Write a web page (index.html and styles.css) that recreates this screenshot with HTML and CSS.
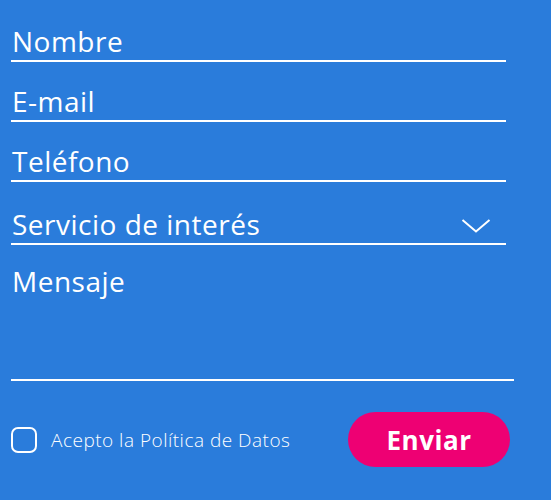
FILE: index.html
```html
<!DOCTYPE html>
<html lang="es">
<head>
<meta charset="utf-8">
<link rel="stylesheet" href="styles.css">
</head>
<body>
<form class="form">
  <div class="field"><span class="label">Nombre</span></div>
  <div class="field"><span class="label">E-mail</span></div>
  <div class="field"><span class="label">Teléfono</span></div>
  <div class="field field-select">
    <span class="label">Servicio de interés</span>
    <svg class="chevron" width="30" height="16" viewBox="0 0 30 16"><path d="M1.5 2 L15 13.5 L28.5 2" fill="none" stroke="#fff" stroke-width="2"/></svg>
  </div>
  <div class="field field-message"><span class="label">Mensaje</span></div>
  <div class="footer">
    <label class="consent"><span class="box"></span><span class="consent-text">Acepto la Política de Datos</span></label>
    <button type="button" class="send">Enviar</button>
  </div>
</form>
</body>
</html>
```
FILE: styles.css
```css
html, body {
  margin: 0;
  padding: 0;
  background: #2a7cdb;
  height: 100%;
}
body {
  font-family: "Open Sans", "Liberation Sans", sans-serif;
  color: #fff;
}
.form {
  padding: 2px 0 0 11px;
  width: 503px;
}
.field {
  width: 495px;
  height: 58px;
  border-bottom: 2px solid #fff;
  display: flex;
  align-items: flex-end;
  justify-content: space-between;
  box-sizing: content-box;
}
.label {
  display: block;
  font-size: 28px;
  line-height: 34px;
  letter-spacing: 0.5px;
  padding-left: 1px;
  padding-bottom: 2px;
}
.field-select {
  height: 61px;
}
.chevron {
  margin-right: 15px;
  margin-bottom: 9px;
}
.field-message {
  width: 503px;
  height: 134px;
  align-items: flex-start;
}
.field-message .label {
  padding-top: 19px;
}
.footer {
  display: flex;
  align-items: center;
  justify-content: space-between;
  width: 499px;
  margin-top: 31px;
}
.consent {
  display: flex;
  align-items: center;
  gap: 14px;
}
.box {
  width: 22px;
  height: 22px;
  border: 2px solid #fff;
  border-radius: 7px;
}
.consent-text {
  font-size: 19px;
  font-weight: 300;
  letter-spacing: 0.5px;
}
.send {
  width: 162px;
  height: 55px;
  border: none;
  border-radius: 28px;
  background: #ee0073;
  color: #fff;
  font-family: "Open Sans", "Liberation Sans", sans-serif;
  font-weight: 700;
  font-size: 26px;
  letter-spacing: 0.5px;
  padding: 0;
}
```
